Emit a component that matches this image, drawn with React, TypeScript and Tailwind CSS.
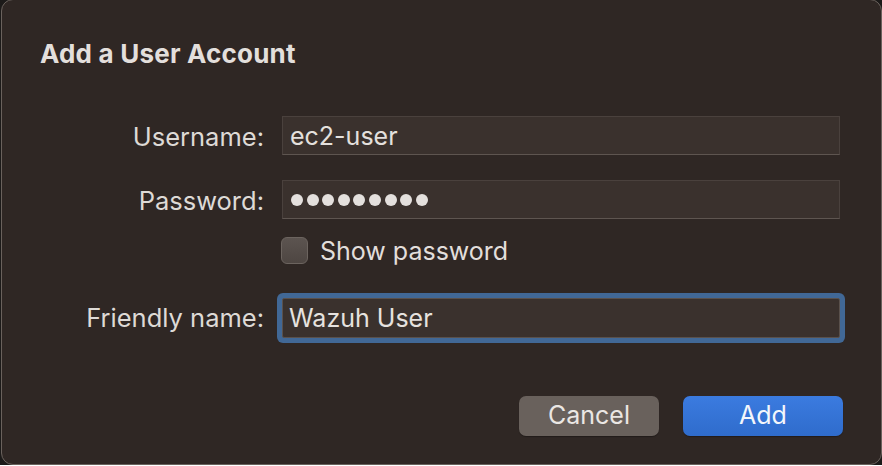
import { useState } from "react";

const labelCls = "w-[224px] shrink-0 text-right text-[25.5px] leading-none text-[#dedad6]";
const fieldCls =
    "w-[558px] h-[39px] flex items-center px-[7px] pt-[3px] bg-[#3a312d] border border-[#4a413d] border-b-[#5e5550] text-[25px] text-[#e4e0dd]";

export default function App() {
    const [showPassword, setShowPassword] = useState(false);

    return (
        <div className="w-[882px] h-[466px] bg-[#1c1a19] font-['Inter',sans-serif]">
            <div className="w-[881px] h-[466px] -mt-[1px] ml-[1px] rounded-[12px] border border-[#6a625d] bg-[#2f2724] flex flex-col pl-[38px] pt-[39px]">
                <h1 className="text-[26px] font-bold leading-[30px] text-[#e3dfdc] tracking-[0.2px]">
                    Add a User Account
                </h1>

                {/* form rows */}
                <div className="flex flex-col mt-[47px]">
                    <div className="flex items-center gap-[18px]">
                        <span className={`${labelCls} pt-[3px]`}>Username:</span>
                        <div className={fieldCls}>ec2-user</div>
                    </div>

                    <div className="flex items-center gap-[18px] mt-[25px]">
                        <span className={`${labelCls} pt-[3px]`}>Password:</span>
                        <div className="w-[558px] h-[39px] flex items-center px-[7px] bg-[#3a312d] border border-[#4a413d] border-b-[#5e5550]">
                            <div className="flex gap-[3.6px] pl-[1px]">
                                {Array.from({ length: 9 }).map((_, i) => (
                                    <span key={i} className="w-[12px] h-[12px] rounded-full bg-[#e4e0dd]" />
                                ))}
                            </div>
                        </div>
                    </div>

                    <div className="flex items-center mt-[17px] pl-[241px]">
                        <button
                            type="button"
                            onClick={() => setShowPassword(!showPassword)}
                            className="w-[27px] h-[27px] rounded-[6px] border border-[#6c645f] bg-gradient-to-b from-[#5c5450] to-[#4e4642]"
                        />
                        <span className="ml-[12px] pt-[3px] text-[25px] leading-none text-[#e2dedb]">Show password</span>
                    </div>

                    <div className="flex items-center gap-[18px] mt-[34px]">
                        <span className={labelCls}>Friendly name:</span>
                        <div className="w-[558px] h-[40px] flex items-center px-[6px] pt-[1px] bg-[#3a312d] border border-[#5a514c] rounded-[2px] shadow-[0_0_0_5px_#416896] text-[25px] text-[#e6e2df]">
                            Wazuh User
                        </div>
                    </div>
                </div>

                <div className="flex justify-end gap-[24px] mt-[58px] pr-[38px]">
                    <button className="w-[140px] h-[40px] rounded-[7px] bg-[#69615c] text-[25px] text-[#ebe7e4] shadow-[0_1px_1px_rgba(0,0,0,0.3)]">
                        Cancel
                    </button>
                    <button className="w-[160px] h-[40px] rounded-[7px] bg-gradient-to-b from-[#3b7be0] to-[#2f6ccc] text-[25px] text-[#f3f6fb] shadow-[0_1px_1px_rgba(0,0,0,0.3)]">
                        Add
                    </button>
                </div>
            </div>
        </div>
    );
}
